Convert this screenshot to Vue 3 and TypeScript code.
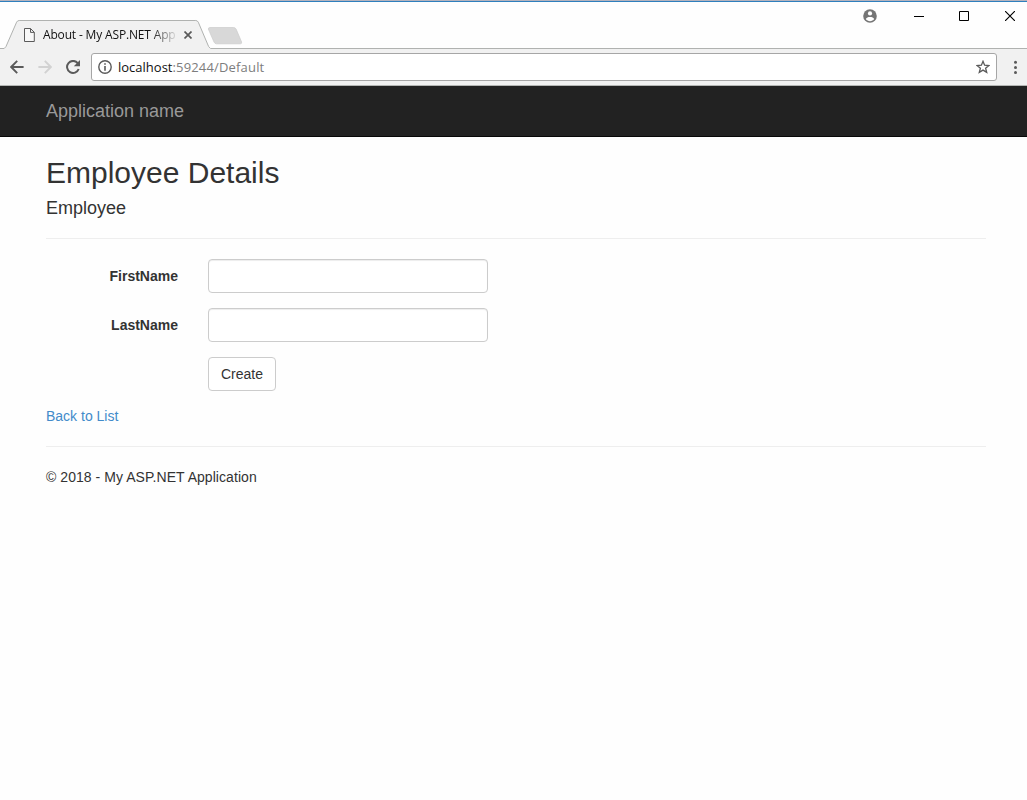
<script setup lang="ts">
import { reactive } from 'vue'

interface Field {
  key: 'firstName' | 'lastName'
  label: string
}

const fields: Field[] = [
  { key: 'firstName', label: 'FirstName' },
  { key: 'lastName', label: 'LastName' },
]

const employee = reactive({ firstName: '', lastName: '' })
</script>

<template>
  <div class="window">
    <header class="tab-strip">
      <svg class="tab-shape" width="1027" height="47" viewBox="0 2 1027 47">
        <path d="M0 48.5H4.2L6 46.5L16.6 22.2Q17.4 20.5 19.2 20.5H195.8Q197.4 20.5 198.3 22.2L208.6 46.5L210.5 48.5H1027V49H0Z" fill="#f1f1f1" />
        <path d="M0 48.5H4.2L6 46.5L16.6 22.2Q17.4 20.5 19.2 20.5H195.8Q197.4 20.5 198.3 22.2L208.6 46.5L210.5 48.5H1027" fill="none" stroke="#b0b2b0" />
        <path d="M210 27.5H233.5Q235.4 27.5 236.2 29.3L241.6 42Q242 43.8 240.3 43.8H216.5Q214.8 43.8 214 42L208.4 29.2Q208 27.5 210 27.5Z" fill="#d8d8d8" stroke="#cccccc" stroke-width="0.7" />
      </svg>
      <div class="tab">
        <svg class="page-icon" width="11" height="14" viewBox="0 0 11 14">
          <path d="M0.5 0.5H6.5L10.3 4.3V13.5H0.5ZM6.5 0.5V4.4H10.3" fill="#f8f8f8" stroke="#5a5a5a" stroke-width="1" />
        </svg>
        <span class="tab-title">About - My ASP.NET App</span>
        <svg class="tab-close" width="8" height="8" viewBox="0 0 8 8">
          <path d="M0.5 0.5L7.5 7.5M7.5 0.5L0.5 7.5" stroke="#5a5a5a" stroke-width="1.7" />
        </svg>
      </div>
      <div class="window-controls">
        <svg width="14" height="14" viewBox="0 0 14 14">
          <circle cx="7" cy="7" r="6.8" fill="#757575" />
          <circle cx="7" cy="4.4" r="2.1" fill="#fff" />
          <path d="M2.8 10.1C3.2 8.5 5.2 7.9 7 7.9S10.8 8.5 11.2 10.1C10.2 11.5 8.7 12.2 7 12.2S3.8 11.5 2.8 10.1Z" fill="#fff" />
        </svg>
        <svg class="minimize" width="10" height="10" viewBox="0 0 10 10"><path d="M0 5.5H10" stroke="#000" /></svg>
        <svg class="maximize" width="10" height="10" viewBox="0 0 10 10"><path d="M0.5 0.5H9.5V9.5H0.5Z" fill="none" stroke="#000" /></svg>
        <svg class="close" width="10" height="10" viewBox="0 0 10 10"><path d="M0 0L10 10M10 0L0 10" stroke="#000" stroke-width="1.15" /></svg>
      </div>
    </header>

    <div class="toolbar">
      <svg class="back" width="14" height="14" viewBox="0 0 14 14">
        <path d="M13.6 7H1.5M7.2 0.9L1.2 7L7.2 13.1" fill="none" stroke="#5a5a5a" stroke-width="1.9" />
      </svg>
      <svg class="forward" width="14" height="14" viewBox="0 0 14 14">
        <path d="M0.4 7H12.5M6.8 0.9L12.8 7L6.8 13.1" fill="none" stroke="#d2d2d2" stroke-width="1.9" />
      </svg>
      <svg class="reload" width="14" height="14" viewBox="0 0 14 14">
        <path d="M11.7 3.1A6 6 0 1 0 12.7 9" fill="none" stroke="#5a5a5a" stroke-width="2" />
        <path d="M14 0V6.2H7.8Z" fill="#5a5a5a" />
      </svg>
      <div class="omnibox">
        <svg width="14" height="14" viewBox="0 0 14 14">
          <circle cx="7" cy="7" r="6.2" fill="none" stroke="#5a5a5a" stroke-width="1.4" />
          <path d="M7 3.2V4.8M7 6V10.8" stroke="#5a5a5a" stroke-width="1.6" />
        </svg>
        <span class="url"><span class="host">localhost</span>:59244/Default</span>
        <svg class="star" width="14" height="14" viewBox="0 0 14 14">
          <path d="M7 1.3L8.6 5.2L12.9 5.5L9.6 8.2L10.7 12.4L7 10.1L3.3 12.4L4.4 8.2L1.1 5.5L5.4 5.2Z" fill="none" stroke="#5a5a5a" stroke-width="1.3" />
        </svg>
      </div>
      <svg class="menu" width="4" height="14" viewBox="0 0 4 14">
        <g fill="#5a5a5a"><circle cx="2.5" cy="2.3" r="1.5" /><circle cx="2.5" cy="7.4" r="1.5" /><circle cx="2.5" cy="12.4" r="1.5" /></g>
      </svg>
    </div>

    <nav class="navbar"><a class="brand">Application name</a></nav>

    <main class="content">
      <h2>Employee Details</h2>
      <h4>Employee</h4>
      <hr>
      <form class="form" @submit.prevent>
        <div v-for="field in fields" :key="field.key" class="form-row">
          <label :for="field.key">{{ field.label }}</label>
          <input :id="field.key" v-model="employee[field.key]" type="text">
        </div>
        <div class="form-row">
          <span></span>
          <button type="submit">Create</button>
        </div>
      </form>
      <a class="back-link">Back to List</a>
      <hr>
      <footer>© 2018 - My ASP.NET Application</footer>
    </main>
  </div>
</template>

<style>
body {
  margin: 0;
  background: #fff;
}
</style>

<style scoped>
.window {
  box-sizing: border-box;
  height: 800px;
  overflow: hidden;
  background: #fefefe;
  color: #333;
  font: 14px/20px "Liberation Sans", Arial, sans-serif;
}
svg {
  display: block;
  flex: none;
}
.tab-strip {
  position: relative;
  display: flex;
  justify-content: space-between;
  box-sizing: border-box;
  height: 49px;
  border-top: 1px solid #b5b3bd;
  box-shadow: inset 0 1px #2f7fbd;
}
.tab-shape {
  position: absolute;
  left: 0;
  top: 1px;
}
.tab {
  position: relative;
  display: flex;
  align-items: center;
  height: 28px;
  margin-top: 20px;
  padding-left: 24px;
}
.tab-title {
  width: 132px;
  margin-left: 8px;
  white-space: nowrap;
  color: #111;
  font: 12px/18px "Open Sans", sans-serif;
  letter-spacing: -0.16px;
  -webkit-mask-image: linear-gradient(90deg, #000 108px, transparent 136px);
  mask-image: linear-gradient(90deg, #000 108px, transparent 136px);
}
.tab-close {
  margin-left: 9px;
}
.window-controls {
  position: relative;
  display: flex;
  align-items: center;
  height: 14px;
  margin-top: 8px;
  padding-right: 12px;
}
.minimize {
  margin-left: 37px;
}
.maximize {
  margin-left: 35px;
}
.close {
  margin-left: 36px;
}
.toolbar {
  display: flex;
  align-items: center;
  box-sizing: border-box;
  height: 37px;
  padding: 0 10px 1px;
  border-bottom: 1px solid #b4b6b4;
  background: #f1f1f1;
}
.forward {
  margin-left: 14px;
}
.reload {
  margin-left: 14px;
}
.omnibox {
  display: flex;
  align-items: center;
  box-sizing: border-box;
  width: 906px;
  height: 28px;
  margin-left: 11px;
  padding: 0 6px;
  border: 1px solid #a6a6a6;
  border-radius: 3px;
  background: #fff;
}
.url {
  margin-left: 6px;
  color: #7d7d7d;
  font: 13px/20px "Open Sans", sans-serif;
  letter-spacing: 0.17px;
  white-space: nowrap;
}
.host {
  color: #111;
  letter-spacing: 0;
}
.star {
  margin-left: auto;
}
.menu {
  margin-left: 16px;
}
.navbar {
  box-sizing: border-box;
  height: 51px;
  padding: 15px 46px;
  border-bottom: 1px solid #080808;
  background: #222;
}
.brand {
  color: #999;
  font-size: 18px;
}
.content {
  width: 940px;
  margin-left: 46px;
  padding-top: 19px;
}
h2,
h4 {
  margin: 0;
  font-weight: 500;
}
h2 {
  font-size: 30px;
  line-height: 33px;
}
h4 {
  margin-top: 9px;
  font-size: 18px;
  line-height: 20px;
}
hr {
  height: 1px;
  margin: 20px 0;
  border: 0;
  background: #eee;
}
.form {
  display: grid;
  gap: 15px;
  margin-bottom: 15px;
}
.form-row {
  display: grid;
  grid-template-columns: 132px 280px;
  column-gap: 30px;
  align-items: center;
  height: 34px;
}
label {
  text-align: right;
  font-weight: 700;
}
input {
  box-sizing: border-box;
  width: 280px;
  height: 34px;
  padding: 6px 12px;
  border: 1px solid #ccc;
  border-radius: 4px;
  outline: 0;
  background: #fff;
  box-shadow: inset 0 1px 1px rgba(0, 0, 0, 0.075);
  font: inherit;
}
button {
  justify-self: start;
  box-sizing: border-box;
  width: 68px;
  height: 34px;
  padding: 0;
  border: 1px solid #ccc;
  border-radius: 4px;
  background: #fff;
  color: #333;
  font: inherit;
}
.back-link {
  display: block;
  color: #428bca;
}
footer {
  letter-spacing: 0.055px;
}
</style>
